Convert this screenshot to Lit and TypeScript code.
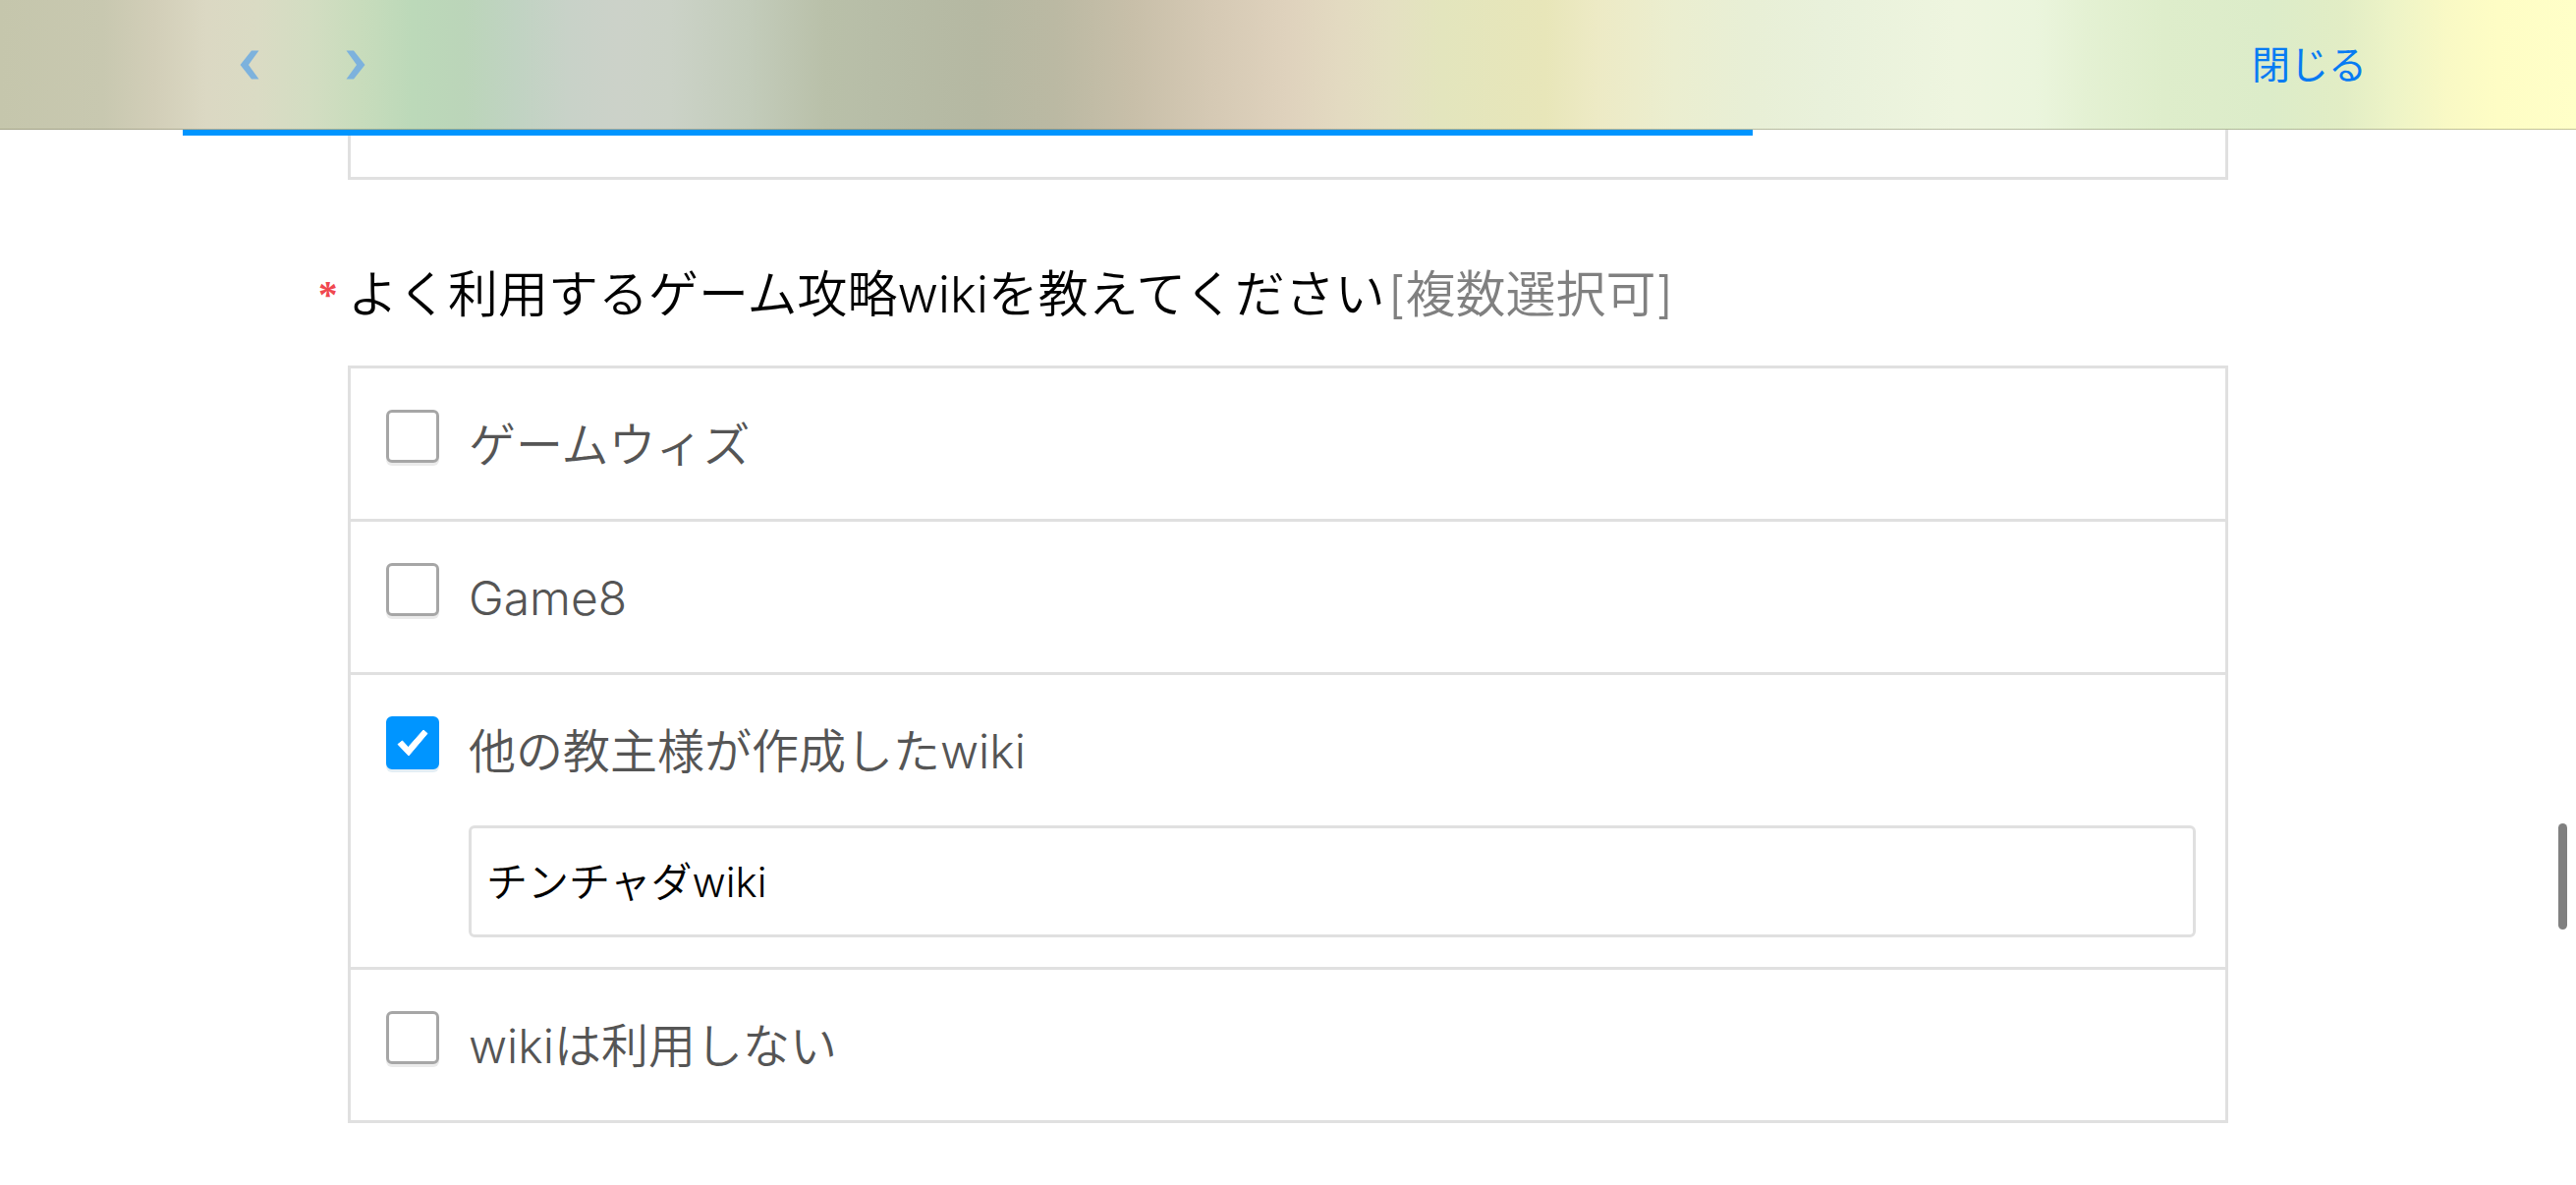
import { LitElement, html, css, svg, nothing } from "lit";
import { customElement, property, state } from "lit/decorators.js";

interface Choice {
  id: string;
  label: string;
  checked: boolean;
  detail?: string;
}

@customElement("browser-bar")
class BrowserBar extends LitElement {
  static styles = css`
    :host {
      display: block;
    }
    .bar {
      box-sizing: border-box;
      height: 132px;
      padding: 0 213px 0 228px;
      display: flex;
      align-items: center;
      justify-content: space-between;
      border-bottom: 1px solid rgba(110, 110, 80, 0.4);
      background: linear-gradient(
        90deg,
        #c5c6ac 0%,
        #c8c8b0 4%,
        #d2ceb8 6%,
        #dbd8c3 8%,
        #dadbc4 10%,
        #d3ddc2 12%,
        #c8dcbc 14%,
        #bcd9b9 16%,
        #bbd5b9 18%,
        #c0d3c2 20%,
        #c8d2c8 22%,
        #ccd2c9 24%,
        #cbd2c7 26%,
        #c3ccbb 29%,
        #b9c0a9 32%,
        #b7bda7 34%,
        #b5b8a2 38%,
        #bbb9a3 41%,
        #c8bfa9 44%,
        #d5c9b4 47%,
        #dfd2bd 50%,
        #e3dac1 52%,
        #e4e0c2 54%,
        #e3e5bd 56%,
        #e8e6b9 60%,
        #edeac5 62%,
        #ebeed0 65%,
        #e8efd6 68%,
        #e9f1db 71%,
        #eef5df 76%,
        #ebf5dd 79%,
        #e4f1d3 81%,
        #deedcb 84%,
        #dcecc9 88%,
        #e2edc5 91%,
        #eef4c7 93%,
        #f9f9c5 95%,
        #fefdc5 97%,
        #ffffc8 100%
      );
    }
    .nav {
      display: flex;
      gap: 57px;
    }
    button {
      appearance: none;
      border: 0;
      background: none;
      margin: 0;
      padding: 0;
      font: inherit;
      cursor: pointer;
    }
    .step {
      display: flex;
      width: 51px;
      height: 66px;
      align-items: center;
      justify-content: center;
    }
    .chevron {
      width: 20px;
      height: 30px;
      fill: #7db2dd;
    }
    .close {
      padding-bottom: 6px;
      font-family: "Noto Sans CJK JP", sans-serif;
      font-weight: 400;
      font-size: 39px;
      line-height: 66px;
      color: #077bf3;
    }
  `;

  render() {
    return html`
      <header class="bar">
        <nav class="nav">
          <button class="step" aria-label="戻る">
            <svg class="chevron" viewBox="0 0 20 30" aria-hidden="true">
              ${svg`<path d="M12 0.5H19.5L9 15L19.5 29.5H12L0.5 15Z" />`}
            </svg>
          </button>
          <button class="step" aria-label="進む">
            <svg class="chevron" viewBox="0 0 20 30" aria-hidden="true">
              ${svg`<path d="M8 0.5H0.5L11 15L0.5 29.5H8L19.5 15Z" />`}
            </svg>
          </button>
        </nav>
        <button class="close">閉じる</button>
      </header>
    `;
  }
}

@customElement("choice-row")
class ChoiceRow extends LitElement {
  @property({ attribute: false }) choice!: Choice;

  static styles = css`
    :host {
      display: block;
    }
    .row {
      display: grid;
      grid-template-columns: 54px 1fr;
      column-gap: 30px;
      padding: 42px 30px 0 36px;
    }
    .tick {
      display: grid;
      width: 54px;
      height: 54px;
    }
    .tick > * {
      grid-area: 1 / 1;
    }
    .box {
      appearance: none;
      box-sizing: border-box;
      margin: 0;
      width: 54px;
      height: 54px;
      border: 3px solid #a6a6a6;
      border-radius: 6px;
      background: #fff;
      box-shadow: 0 3px 0 #ebebeb;
    }
    .box:checked {
      border-color: #0095ff;
      background: #0095ff;
      box-shadow: 0 3px 0 #e3eef5;
    }
    .mark {
      width: 54px;
      height: 54px;
      fill: #fff;
      stroke: #fff;
      stroke-width: 1;
      stroke-linejoin: round;
      pointer-events: none;
    }
    .label {
      font-size: 48px;
      line-height: 72px;
      padding-bottom: 39px;
      color: #555;
    }
    .detail {
      grid-column: 2;
      box-sizing: border-box;
      width: 100%;
      height: 114px;
      margin: 0 0 30px;
      padding: 0 15px 6px;
      border: 3px solid #e0e0e0;
      border-radius: 6px;
      background: #fff;
      font-family: inherit;
      font-weight: inherit;
      font-size: 42px;
      color: #000;
      outline: none;
    }
  `;

  private toggle(e: Event) {
    const checked = (e.target as HTMLInputElement).checked;
    this.choice = { ...this.choice, checked };
  }

  render() {
    const c = this.choice;
    return html`
      <div class="row">
        <span class="tick">
          <input class="box" type="checkbox" id=${c.id} .checked=${c.checked} @change=${this.toggle} />
          ${c.checked
            ? html`<svg class="mark" viewBox="0 0 54 54" aria-hidden="true">
                ${svg`<path d="M12 28.5L16.5 25L22.5 31.5L38 14L42 17.5L23 40Z" />`}
              </svg>`
            : nothing}
        </span>
        <label class="label" for=${c.id}>${c.label}</label>
        ${c.detail !== undefined && c.checked
          ? html`<input class="detail" type="text" aria-label=${c.label} .value=${c.detail} />`
          : nothing}
      </div>
    `;
  }
}

@customElement("app-root")
class AppRoot extends LitElement {
  @state() private progress = 71;
  @state() private choices: Choice[] = [
    { id: "gamewith", label: "ゲームウィズ", checked: false },
    { id: "game8", label: "Game8", checked: false },
    { id: "other", label: "他の教主様が作成したwiki", checked: true, detail: "チンチャダwiki" },
    { id: "none", label: "wikiは利用しない", checked: false },
  ];

  static styles = css`
    :host {
      display: block;
      min-height: 100vh;
      position: relative;
      overflow: hidden;
      background: #fff;
      font-family: Inter, "Noto Sans CJK JP", sans-serif;
      font-weight: 350;
    }
    .page {
      position: relative;
      margin: 0 186px;
      padding: 0 168px 63px;
    }
    .progress {
      position: absolute;
      inset: 0 0 auto 0;
      height: 6px;
    }
    .fill {
      height: 100%;
      background: #0095ff;
    }
    .previous {
      height: 48px;
      border: 3px solid #e0e0e0;
      border-top: 0;
    }
    .question {
      margin: 0;
      padding: 0;
      border: 0;
      min-width: 0;
    }
    .title {
      display: flex;
      align-items: center;
      margin: 0 0 0 -30px;
      padding: 81px 0 36px;
      font-size: 51px;
      line-height: 72px;
      color: #000;
    }
    .required {
      width: 30px;
      font-family: "Liberation Serif", serif;
      font-weight: 700;
      font-size: 39px;
      color: #f0484f;
    }
    .hint {
      color: #808080;
      margin-left: 3px;
    }
    .list {
      border: 3px solid #e0e0e0;
    }
    .item + .item {
      border-top: 3px solid #e0e0e0;
    }
    .thumb {
      position: absolute;
      top: 838px;
      right: 9px;
      width: 9px;
      height: 108px;
      border-radius: 5px;
      background: #808080;
    }
  `;

  render() {
    return html`
      <browser-bar></browser-bar>
      <main class="page">
        <div class="previous"></div>
        <div class="progress"><div class="fill" style="width:${this.progress}%"></div></div>
        <section class="question" role="group" aria-labelledby="title">
          <div class="title">
            <span class="required">*</span>
            <span id="title">よく利用するゲーム攻略wikiを教えてください</span>
            <span class="hint">[複数選択可]</span>
          </div>
          <div class="list">
            ${this.choices.map((c) => html`<choice-row class="item" .choice=${c}></choice-row>`)}
          </div>
        </section>
      </main>
      <div class="thumb"></div>
    `;
  }
}
